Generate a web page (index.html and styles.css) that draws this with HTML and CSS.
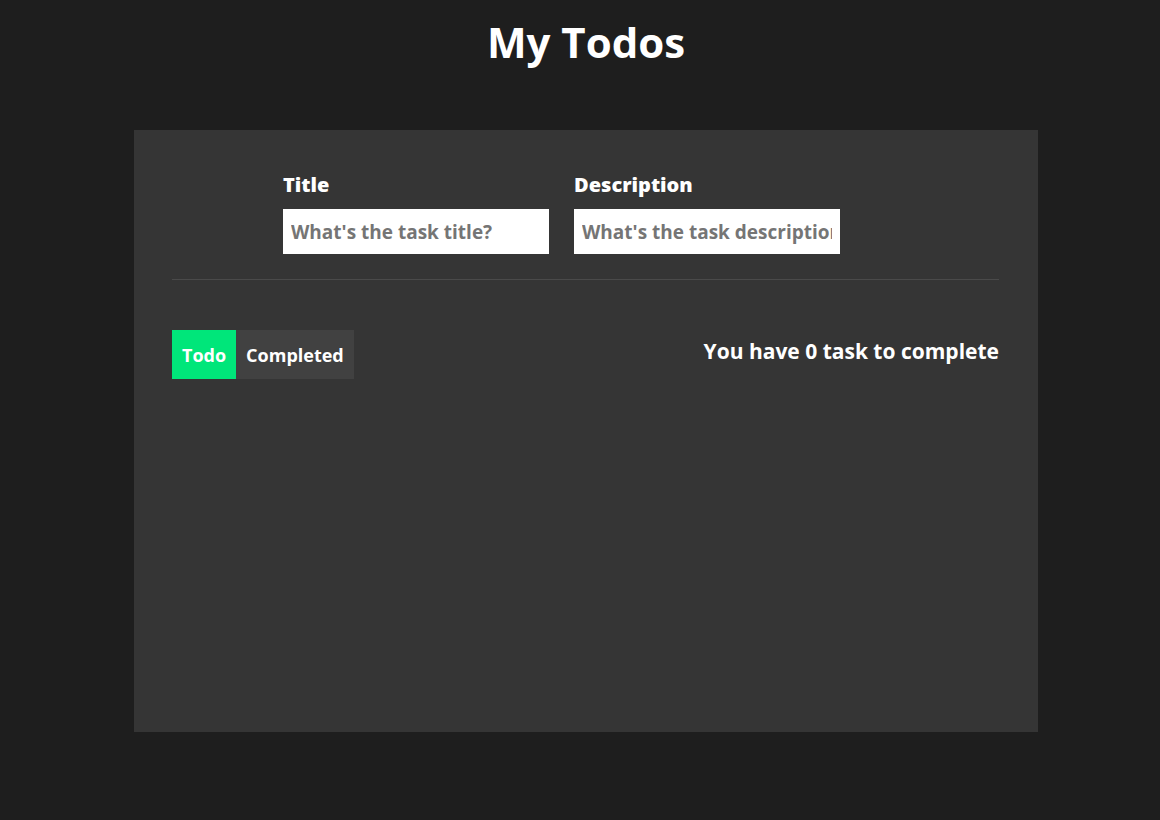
FILE: index.html
```html
<!DOCTYPE html>
<html>
<head>
<meta charset="utf-8">
<link rel="stylesheet" href="styles.css">
</head>
<body>
<h1 class="page-title">My Todos</h1>
<div class="todo-wrapper">
  <div class="todo-input">
    <div class="todo-input-item">
      <label>Title</label>
      <input type="text" placeholder="What's the task title?">
    </div>
    <div class="todo-input-item">
      <label>Description</label>
      <input type="text" placeholder="What's the task description?">
    </div>
  </div>
  <div class="btn-area">
    <div class="tabs">
      <button class="tab active">Todo</button>
      <button class="tab">Completed</button>
    </div>
    <div class="count">You have 0 task to complete</div>
  </div>
</div>
</body>
</html>
```
FILE: styles.css
```css
html, body {
  margin: 0;
  padding: 0;
  background: #1e1e1e;
  color: #fff;
  font-family: "Open Sans", "Lato", sans-serif;
}
body {
  padding-left: 12px;
}
.page-title {
  margin: 0;
  padding-top: 13px;
  height: 130px;
  box-sizing: border-box;
  text-align: center;
  font-size: 42px;
  font-weight: 700;
  line-height: 58px;
}
.todo-wrapper {
  width: 904px;
  height: 602px;
  margin: 0 auto;
  box-sizing: border-box;
  background: #353535;
  padding: 38px 39px 0 38px;
}
.todo-input {
  display: flex;
  justify-content: center;
  gap: 25px;
  padding: 4px 49px 25px 1px;
  border-bottom: 1px solid #4a4a4a;
}
.todo-input-item {
  display: flex;
  flex-direction: column;
}
.todo-input-item label {
  font-size: 20px;
  font-weight: 800;
  line-height: 26px;
  margin-bottom: 11px;
}
.todo-input-item input {
  width: 266px;
  height: 45px;
  box-sizing: border-box;
  border: none;
  outline: none;
  padding: 0 8px;
  font-family: "Open Sans", "Lato", sans-serif;
  font-size: 19px;
  font-weight: 700;
  color: #666;
  background: #fff;
}
.todo-input-item input::placeholder {
  color: #757575;
}
.btn-area {
  display: flex;
  justify-content: space-between;
  align-items: flex-start;
  margin-top: 50px;
}
.tabs {
  display: flex;
}
.tab {
  border: none;
  height: 49px;
  padding: 0 10px;
  background: #414141;
  color: #fff;
  font-family: "Open Sans", "Lato", sans-serif;
  font-size: 18px;
  font-weight: 700;
  cursor: pointer;
}
.tab.active {
  background: #00e67a;
}
.count {
  font-size: 21px;
  font-weight: 700;
  line-height: 42px;
}
```
